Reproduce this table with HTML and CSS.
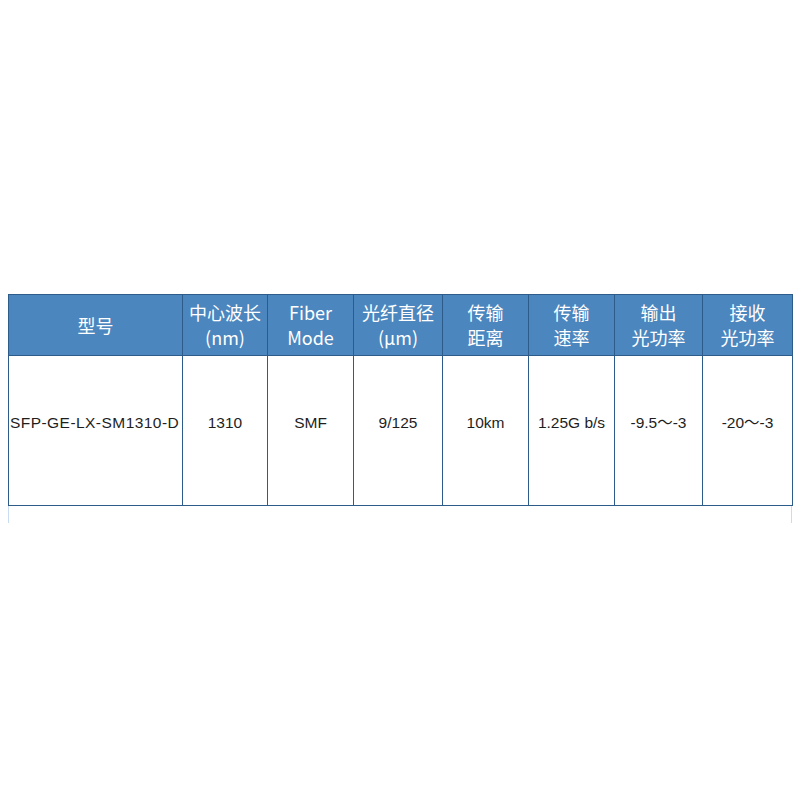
FILE: index.html
```html
<!DOCTYPE html>
<html lang="zh-CN">
<head>
<meta charset="utf-8">
<title>SFP</title>
<link rel="stylesheet" href="styles.css">
</head>
<body>
<div class="wrap">
<table class="spec">
  <colgroup>
    <col class="c1"><col class="c2"><col class="c3"><col class="c4"><col class="c5"><col class="c6"><col class="c7"><col class="c8">
  </colgroup>
  <thead>
    <tr>
      <th>型号</th>
      <th>中心波长<br>(nm)</th>
      <th>Fiber<br>Mode</th>
      <th>光纤直径<br>(μm)</th>
      <th>传输<br>距离</th>
      <th>传输<br>速率</th>
      <th>输出<br>光功率</th>
      <th>接收<br>光功率</th>
    </tr>
  </thead>
  <tbody>
    <tr>
      <td class="model">SFP-GE-LX-SM1310-D</td>
      <td>1310</td>
      <td>SMF</td>
      <td>9/125</td>
      <td>10km</td>
      <td>1.25G b/s</td>
      <td>-9.5～-3</td>
      <td>-20～-3</td>
    </tr>
  </tbody>
</table>
<div class="tail"></div>
</div>
</body>
</html>
```
FILE: styles.css
```css
html, body {
  margin: 0;
  padding: 0;
  background: #ffffff;
}
.wrap {
  padding-top: 294px;
  padding-left: 8px;
  width: 784px;
}
.spec {
  border-collapse: collapse;
  table-layout: fixed;
  width: 784px;
  font-family: "Liberation Sans", "Noto Sans CJK SC", sans-serif;
}
.c1 { width: 174px; }
.c2 { width: 85px; }
.c3 { width: 86px; }
.c4 { width: 89px; }
.c5 { width: 86px; }
.c6 { width: 86px; }
.c7 { width: 88px; }
.c8 { width: 90px; }
.spec th, .spec td {
  border: 1px solid #2e5c8a;
  padding: 0;
  text-align: center;
}
.spec th {
  background: #4b86be;
  color: #ffffff;
  font-family: "Noto Sans CJK SC", "Liberation Sans", sans-serif;
  font-weight: 400;
  font-size: 18px;
  line-height: 25px;
  height: 60px;
  vertical-align: middle;
  padding: 0;
}
.spec td {
  height: 150px;
  vertical-align: top;
  padding-top: 57px;
  box-sizing: border-box;
  font-size: 15.5px;
  line-height: 20px;
  color: #1e1e1e;
  white-space: nowrap;
}
.spec td.model {
  text-align: left;
  padding-left: 1px;
  letter-spacing: 0.45px;
}
.tail {
  height: 17px;
  width: 782px;
  border-left: 1px solid #c9dcf2;
  border-right: 1px solid #c9dcf2;
}
```
